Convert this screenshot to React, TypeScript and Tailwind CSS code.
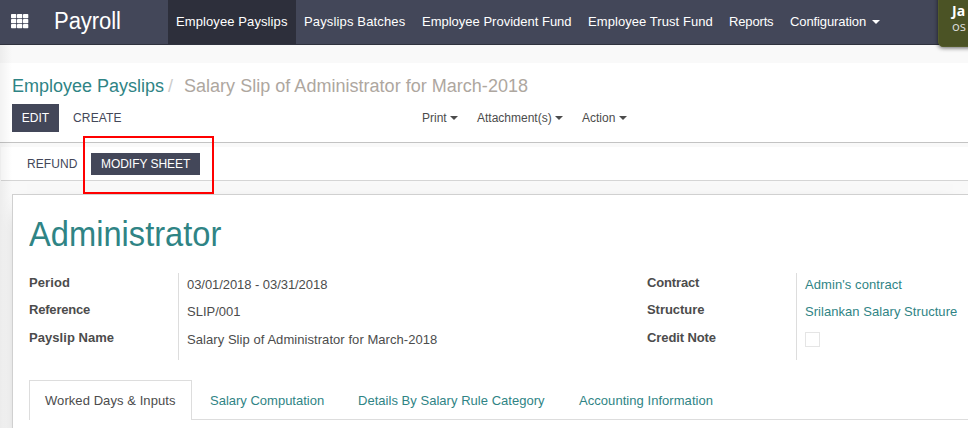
import React from "react";

function Caret({ className = "" }: { className?: string }) {
  return (
    <span
      className={`inline-block h-0 w-0 border-x-4 border-t-4 border-x-transparent border-t-current ${className}`}
    />
  );
}

function AppsIcon() {
  const columns = [0, 6, 12];
  const rows = [0, 5, 10];
  return (
    <svg width="18" height="15" viewBox="0 0 18 15" fill="white">
      {columns.map((x) =>
        rows.map((y) => (
          <rect key={`${x}-${y}`} x={x} y={y} width="5.3" height="4.2" rx="0.7" />
        )),
      )}
    </svg>
  );
}

type FieldProps = {
  label: string;
  height: string;
  labelTracking?: string;
  valueTracking?: string;
  children: React.ReactNode;
};

function Field({ label, height, labelTracking = "", valueTracking = "", children }: FieldProps) {
  return (
    <div className={`flex ${height}`}>
      <div className={`w-[158px] pt-px font-bold leading-[20px] ${labelTracking}`}>{label}</div>
      <div className={`pt-[3px] leading-[20px] ${valueTracking}`}>{children}</div>
    </div>
  );
}

export default function App() {
  return (
    <div className="relative h-[428px] w-[968px] overflow-hidden whitespace-nowrap bg-[#f9f9f9] font-['Liberation_Sans',Arial,sans-serif] text-[13px] text-[#4c4c4c]">
      <header className="flex h-[45px] border-b border-[#2f323e] bg-[#434759] text-white">
        <div className="w-[54px] pl-[11px] pt-[14px]">
          <AppsIcon />
        </div>
        <div className="w-[114px] origin-left scale-x-[0.96] pt-[6px] text-[23px] leading-[30px] tracking-[-0.1px]">Payroll</div>
        <nav className="flex leading-[43px]">
          <div className="w-[128px] bg-[#2d2f3b] pl-2 tracking-[0.1px]">Employee Payslips</div>
          <div className="w-[118px] pl-2 tracking-[0.15px]">Payslips Batches</div>
          <div className="w-[166px] pl-2">Employee Provident Fund</div>
          <div className="w-[141px] pl-2 tracking-[0.07px]">Employee Trust Fund</div>
          <div className="w-[61px] pl-2 tracking-[-0.15px]">Reports</div>
          <div className="flex h-[43px] items-center pl-2 tracking-[-0.1px]">
            Configuration
            <Caret className="ml-[6px]" />
          </div>
        </nav>
      </header>

      <section className="mt-[18px] h-[80px] border-b border-[#c3c3c3] bg-white">
        <div className="flex h-[41px] pl-3 pt-[11px] text-[18px] leading-[24px]">
          <span className="w-[156px] text-[#2f8485]">Employee Payslips</span>
          <span className="w-[16px] text-[#cccccc]">/</span>
          <span className="tracking-[0.02px] text-[#aea79f]">Salary Slip of Administrator for March-2018</span>
        </div>
        <div className="flex h-7 pl-3 text-[12px] leading-[28px]">
          <button className="w-[47px] bg-[#434759] text-white">EDIT</button>
          <button className="w-[363px] pl-[14px] text-left tracking-[0.15px] text-[#434759]">CREATE</button>
          <div className="flex w-[55px] items-center">Print<Caret className="ml-[3px]" /></div>
          <div className="flex w-[105px] items-center">Attachment(s)<Caret className="ml-[3px]" /></div>
          <div className="flex items-center">Action<Caret className="ml-1" /></div>
        </div>
      </section>

      <section className="ml-px mt-1 flex h-[34px] items-start border-b border-[#d5d5d5] bg-white pl-[26px] pt-[6px] text-[12px] leading-[22px]">
        <button className="h-[22px] w-[64px] text-left tracking-[0.1px] text-[#434759]">REFUND</button>
        <button className="h-[22px] w-[109px] bg-[#434759] pl-[10px] text-left tracking-[-0.05px] text-white">MODIFY SHEET</button>
      </section>

      <main className="ml-3 mt-[13px] h-[260px] border-l border-t border-[#d0d0d0] bg-white pl-4 shadow-[0_5px_20px_-15px_#000]">
        <h1 className="h-[77px] origin-left scale-x-[0.933] pt-[18px] text-[35px] leading-[42px] text-[#2f8485]">
          Administrator
        </h1>
        <div className="flex">
          <div className="relative h-[88px] w-[618px]">
            <div className="absolute left-[149px] top-px h-[87px] w-px bg-[#dddddd]" />
            <Field label="Period" height="h-[27px]" labelTracking="tracking-[0.1px]" valueTracking="tracking-[-0.06px]">
              03/01/2018 - 03/31/2018
            </Field>
            <Field label="Reference" height="h-[28px]" labelTracking="tracking-[-0.2px]">SLIP/001</Field>
            <Field label="Payslip Name" height="h-[28px]" labelTracking="tracking-[0.05px]" valueTracking="tracking-[0.06px]">
              Salary Slip of Administrator for March-2018
            </Field>
          </div>
          <div className="relative h-[88px]">
            <div className="absolute left-[149px] top-px h-[87px] w-px bg-[#dddddd]" />
            <Field label="Contract" height="h-[27px]" labelTracking="tracking-[-0.15px]" valueTracking="tracking-[0.08px]">
              <span className="text-[#2f8485]">Admin's contract</span>
            </Field>
            <Field label="Structure" height="h-[28px]" labelTracking="tracking-[-0.05px]" valueTracking="tracking-[0.05px]">
              <span className="text-[#2f8485]">Srilankan Salary Structure</span>
            </Field>
            <Field label="Credit Note" height="h-[28px]" labelTracking="tracking-[-0.1px]">
              <span className="mt-[2px] block h-[15px] w-[15px] border border-[#e5e5e5]" />
            </Field>
          </div>
        </div>
        <div className="mt-5 flex h-10 leading-[40px] text-[#2f8485]">
          <div className="w-[163px] border-x border-t border-[#dddddd] pl-[15px] tracking-[0.07px] text-[#4c4c4c]">
            Worked Days &amp; Inputs
          </div>
          <div className="flex flex-1 border-b border-[#dddddd] pl-[18px] pt-px">
            <div className="w-[148px]">Salary Computation</div>
            <div className="w-[221px] tracking-[0.03px]">Details By Salary Rule Category</div>
            <div className="tracking-[0.05px]">Accounting Information</div>
          </div>
        </div>
      </main>

      <div className="absolute bottom-0 left-0 top-[45px] w-3 bg-gradient-to-r from-black/5 to-transparent" />
      <div className="absolute left-[83px] top-[136px] h-[58px] w-[131px] border-2 border-[#ff0000]" />
      <div className="absolute left-[938px] top-[-8px] h-[55px] w-[60px] rounded-[5px] border border-[#535b2b] bg-[#4b5325] pl-[13px] pt-[9px] font-['Open_Sans',sans-serif] text-white shadow-[0_1px_4px_rgba(0,0,0,0.6)]">
        <div className="text-[14px] font-bold leading-[18px]">Ja</div>
        <div className="text-[13px] leading-[13px] text-[#dddddd]">os</div>
      </div>
    </div>
  );
}
